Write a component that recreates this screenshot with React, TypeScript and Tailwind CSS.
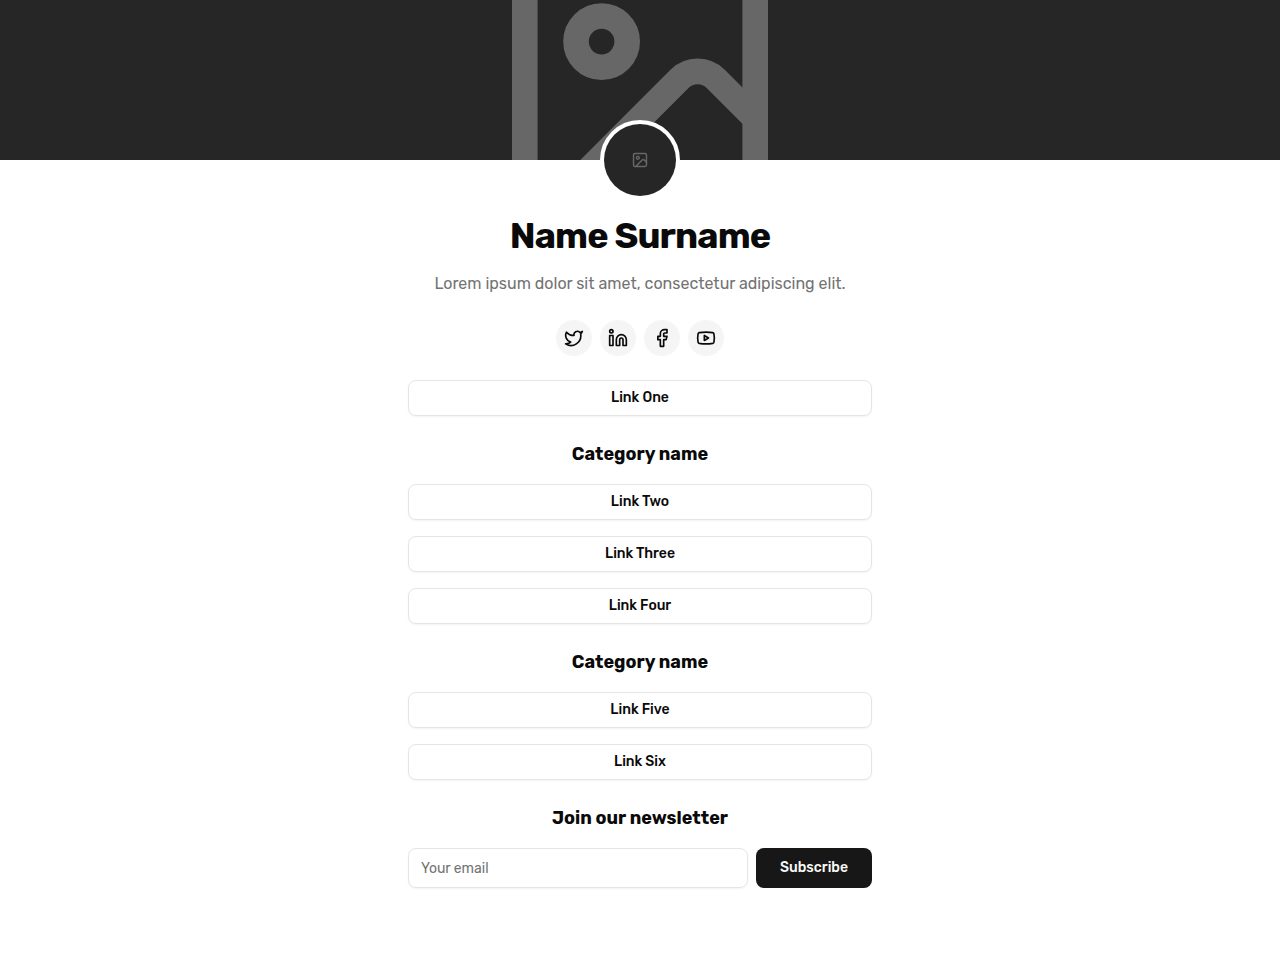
import { Facebook, Linkedin, Twitter, Youtube } from "lucide-react";

const socials = [
  { label: "Twitter", Icon: Twitter },
  { label: "LinkedIn", Icon: Linkedin },
  { label: "Facebook", Icon: Facebook },
  { label: "YouTube", Icon: Youtube },
];

const groups = [
  { title: "", links: ["Link One"] },
  { title: "Category name", links: ["Link Two", "Link Three", "Link Four"] },
  { title: "Category name", links: ["Link Five", "Link Six"] },
];

/* Dark fill with a picture glyph one fifth as wide as the frame. */
function Placeholder({ label }: { label: string }) {
  return (
    <svg
      role="img"
      aria-label={label}
      viewBox="0 0 100 100"
      preserveAspectRatio="xMidYMid slice"
      className="block size-full bg-[#262626]"
    >
      <g
        transform="translate(38 38)"
        fill="none"
        stroke="#676767"
        strokeWidth="2"
        strokeLinecap="round"
        strokeLinejoin="round"
      >
        <rect x="3" y="3" width="18" height="18" rx="2" ry="2" />
        <circle cx="9" cy="9" r="2" />
        <path d="m21 15-3.086-3.086a2 2 0 0 0-2.828 0L6 21" />
      </g>
    </svg>
  );
}

function SectionTitle({ children }: { children: string }) {
  return <h2 className="mb-4 text-center text-lg font-bold">{children}</h2>;
}

export default function App() {
  return (
    <main className="min-h-screen bg-white pb-22 font-[Rubik,Inter,sans-serif] text-neutral-950">
      <div className="h-40 overflow-hidden">
        <Placeholder label="Cover" />
      </div>

      <div className="mx-auto flex max-w-lg flex-col px-6">
        <header className="flex flex-col items-center text-center">
          <div className="relative -mt-10 size-20 overflow-hidden rounded-full border-4 border-white bg-white">
            <Placeholder label="Avatar" />
          </div>
          <h1 className="mt-4 text-4xl font-bold tracking-tight">Name Surname</h1>
          <p className="mt-4 text-base text-neutral-500">
            Lorem ipsum dolor sit amet, consectetur adipiscing elit.
          </p>
          <nav aria-label="Social profiles" className="mt-6 flex gap-2">
            {socials.map(({ label, Icon }) => (
              <a
                key={label}
                href="#"
                aria-label={label}
                className="flex size-9 items-center justify-center rounded-full bg-neutral-100 text-neutral-950 hover:bg-neutral-200"
              >
                <Icon size={20} />
              </a>
            ))}
          </nav>
        </header>

        {groups.map(({ title, links }) => (
          <section key={links[0]} className="mt-6">
            {title && <SectionTitle>{title}</SectionTitle>}
            <div className="flex flex-col gap-4">
              {links.map((link) => (
                <a
                  key={link}
                  href="#"
                  className="flex h-9 items-center justify-center rounded-lg border border-neutral-200 text-sm font-medium shadow-xs hover:bg-neutral-100"
                >
                  {link}
                </a>
              ))}
            </div>
          </section>
        ))}

        <section className="mt-6">
          <SectionTitle>Join our newsletter</SectionTitle>
          <form className="flex gap-2" onSubmit={(e) => e.preventDefault()}>
            <input
              type="email"
              aria-label="Your email"
              placeholder="Your email"
              className="h-10 min-w-0 flex-1 rounded-lg border border-neutral-200 px-3 text-sm shadow-xs placeholder:text-neutral-500"
            />
            <button
              type="submit"
              className="h-10 rounded-lg bg-neutral-900 px-6 text-sm font-medium text-neutral-50 hover:bg-neutral-800"
            >
              Subscribe
            </button>
          </form>
        </section>
      </div>
    </main>
  );
}
